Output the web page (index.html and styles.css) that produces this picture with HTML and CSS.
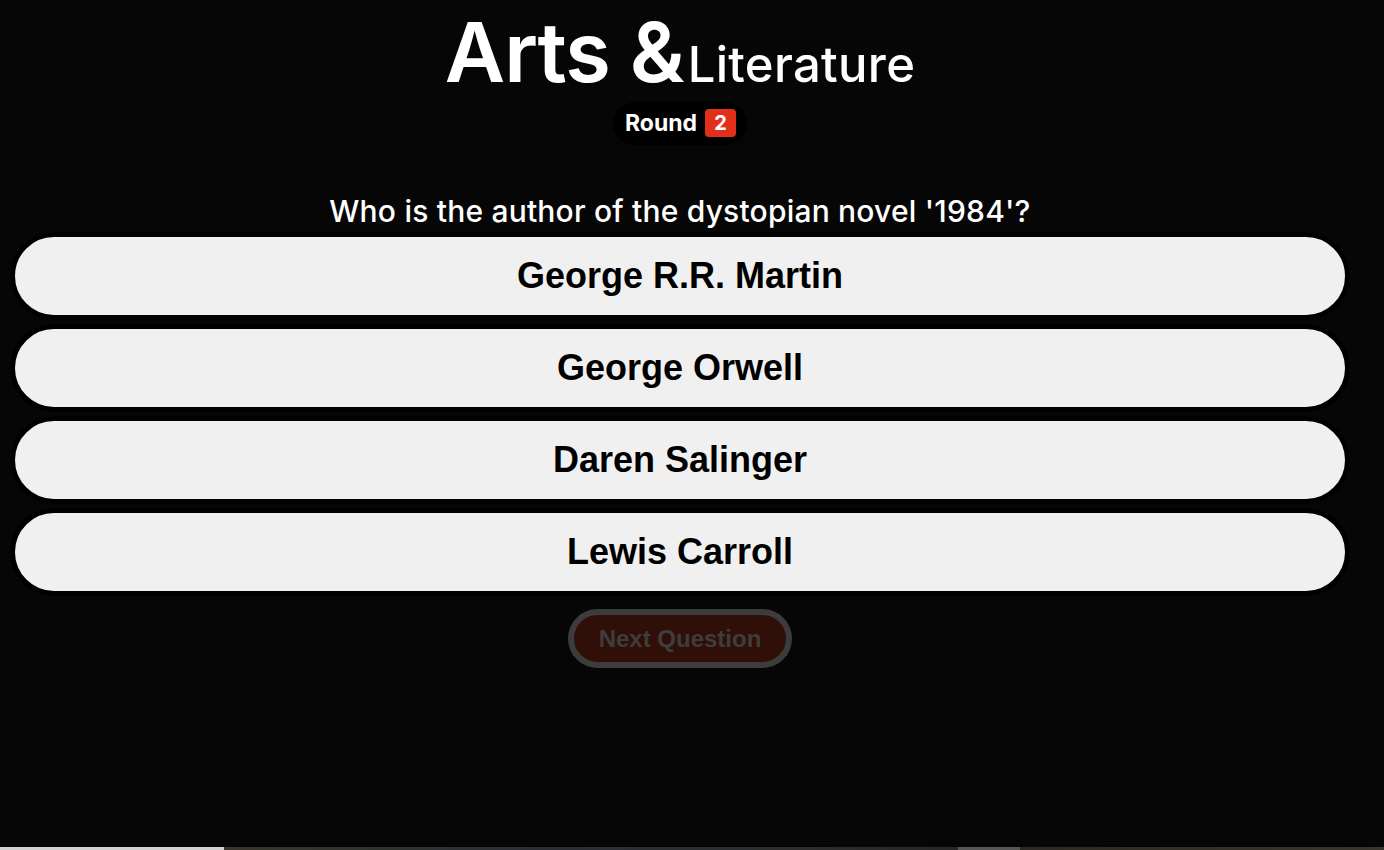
FILE: index.html
```html
<!DOCTYPE html>
<html>
<head>
<meta charset="utf-8">
<link rel="stylesheet" href="styles.css">
</head>
<body>
<main class="quiz">
  <header class="head">
    <h1 class="title"><span class="big">Arts &amp;</span><span class="small">Literature</span></h1>
    <div class="round">Round <span class="badge">2</span></div>
  </header>
  <p class="question">Who is the author of the dystopian novel '1984'?</p>
  <div class="answers">
    <button class="answer">George R.R. Martin</button>
    <button class="answer">George Orwell</button>
    <button class="answer">Daren Salinger</button>
    <button class="answer">Lewis Carroll</button>
  </div>
  <div class="next-wrap"><button class="next">Next Question</button></div>
</main>
<div class="strip"></div>
</body>
</html>
```
FILE: styles.css
```css
html, body {
  margin: 0;
  padding: 0;
  background: #060606;
  height: 100%;
}
body {
  position: relative;
  overflow: hidden;
  font-family: Inter, "Open Sans", "Liberation Sans", sans-serif;
}
.quiz {
  width: 1360px;
  display: flex;
  flex-direction: column;
  align-items: center;
}
.head {
  display: flex;
  flex-direction: column;
  align-items: center;
}
.title {
  margin: 0;
  padding-top: 8px;
  color: #fff;
  font-weight: 600;
  line-height: 88px;
  display: flex;
  align-items: baseline;
  height: 88px;
}
.title .big {
  font-size: 83px;
  letter-spacing: -1px;
}
.title .small {
  font-size: 49px;
  font-weight: 500;
  margin-left: 4px;
  letter-spacing: 0.3px;
}
.round {
  margin-top: 6px;
  background: #000;
  color: #fff;
  font-weight: 700;
  font-size: 23px;
  border-radius: 22px;
  padding: 7px 11px 8px 12px;
  display: flex;
  align-items: center;
  gap: 8px;
}
.badge {
  background: #e0301a;
  color: #fff;
  border-radius: 4px;
  width: 31px;
  height: 28px;
  display: inline-flex;
  align-items: center;
  justify-content: center;
  font-size: 20px;
}
.question {
  margin: 49px 0 4px;
  color: #fff;
  font-size: 30px;
  font-weight: 500;
  line-height: 34px;
  letter-spacing: 0.2px;
}
.answers {
  display: flex;
  flex-direction: column;
  gap: 4px;
  width: 1340px;
}
.answer {
  height: 88px;
  border: 5px solid #000;
  border-radius: 44px;
  background: #f0f0f0;
  color: #000;
  font-family: "Liberation Sans", Arial, sans-serif;
  font-weight: 700;
  font-size: 36px;
  padding: 0;
}
.next-wrap {
  margin-top: 13px;
}
.next {
  width: 224px;
  height: 59px;
  border: 6px solid #3c3c3c;
  border-radius: 30px;
  background: #2f0f08;
  color: #3d3d3d;
  font-family: "Liberation Sans", Arial, sans-serif;
  font-weight: 700;
  font-size: 24px;
  padding: 0;
}
.strip {
  position: absolute;
  left: 0;
  right: 0;
  bottom: 0;
  height: 3px;
  background: linear-gradient(to right,
    #d2d2d2 0, #d2d2d2 224px,
    #36362a 224px, #2a2e34 540px, #2d2d2d 800px, #262626 958px,
    #555 958px, #555 1020px,
    #2a2a22 1020px, #36362a 1384px);
}
```
